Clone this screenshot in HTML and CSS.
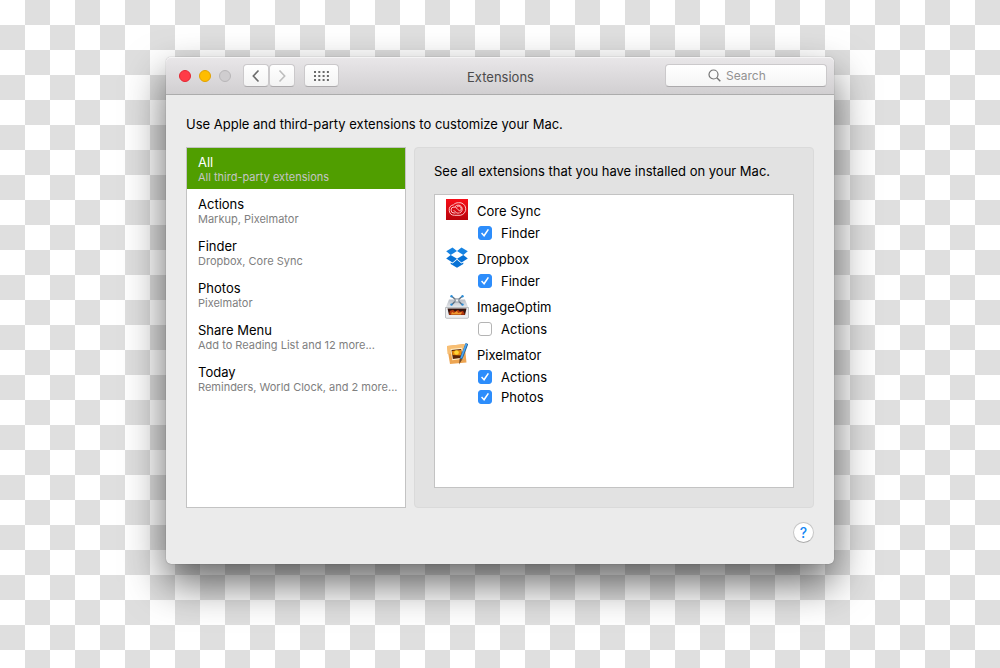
FILE: index.html
```html
<!DOCTYPE html>
<html lang="en">
<head>
<meta charset="utf-8">
<title>Extensions</title>
<link rel="stylesheet" href="styles.css">
</head>
<body>
<div class="window">
  <header class="titlebar">
    <div class="lights">
      <button class="light close" aria-label="Close"></button>
      <button class="light minimize" aria-label="Minimize"></button>
      <button class="light disabled" aria-label="Zoom" disabled></button>
    </div>
    <div class="nav">
      <button class="tool" aria-label="Back"><svg width="10" height="14" viewBox="0 0 10 14"><path d="M7.5 1.500 2.300 7l5.200 5.500" fill="none" stroke="#6c6c6c" stroke-width="1.600"/></svg></button>
      <button class="tool" aria-label="Forward" disabled><svg width="10" height="14" viewBox="0 0 10 14"><path d="M2.500 1.500 7.700 7l-5.200 5.500" fill="none" stroke="#bdbdbd" stroke-width="1.600"/></svg></button>
    </div>
    <button class="tool grid" aria-label="Show All"><svg width="15" height="10" viewBox="0 0 15 10"><path d="M0 1h15M0 5h15M0 9h15" stroke="#6a6a6a" stroke-width="2" stroke-dasharray="2 2.300"/></svg></button>
    <h1 class="title">Extensions</h1>
    <label class="search">
      <svg width="13" height="13" viewBox="0 0 13 13"><circle cx="5.500" cy="5.500" r="4.500" fill="none" stroke="#747474" stroke-width="1.200"/><path d="m8.800 8.800 3.500 3.500" stroke="#747474" stroke-width="1.400"/></svg>
      <input type="search" placeholder="Search" aria-label="Search">
    </label>
  </header>
  <main class="content">
    <p class="intro">Use Apple and third-party extensions to customize your Mac.</p>
    <div class="columns">
      <nav class="sidebar">
        <button class="item selected"><span class="name">All</span><span class="detail">All third-party extensions</span></button>
        <button class="item"><span class="name">Actions</span><span class="detail">Markup, Pixelmator</span></button>
        <button class="item"><span class="name">Finder</span><span class="detail">Dropbox, Core Sync</span></button>
        <button class="item"><span class="name">Photos</span><span class="detail">Pixelmator</span></button>
        <button class="item"><span class="name">Share Menu</span><span class="detail">Add to Reading List and 12 more...</span></button>
        <button class="item"><span class="name">Today</span><span class="detail">Reminders, World Clock, and 2 more...</span></button>
      </nav>
      <section class="panel">
        <p class="hint">See all extensions that you have installed on your Mac.</p>
        <div class="extensions">
          <div class="group">
            <h2 class="app">
              <svg width="22" height="22" viewBox="0 0 22 22"><defs><linearGradient id="red" x2="0" y2="1"><stop stop-color="#f80d18"/><stop offset="1" stop-color="#b8040c"/></linearGradient></defs><path d="M0 0h22v21H0z" fill="url(#red)"/><g fill="none" stroke="#ffd9d9" stroke-width=".9"><path d="M8.600 16.300A5.300 5.300 0 0 1 7.500 5.800C8.800 4.300 10.600 3.700 12.500 3.700A6.300 6.300 0 0 1 14.300 16.300z"/><path d="M13.200 13.900c-1.300.5-2.600.2-3.800-1L7.700 11.200M9.500 14H8a3 3 0 0 1 0-6c1.200 0 2 .5 2.800 1.300l2.700 2.700"/><path d="M8.900 7.900A4 4 0 1 1 13.500 13.900"/><path d="M10.700 8.500a2.400 2.400 0 1 1 2.800 3.400"/></g></svg>
              Core Sync</h2>
            <label class="option"><input type="checkbox" checked>Finder</label>
          </div>
          <div class="group">
            <h2 class="app">
              <svg width="22" height="22" viewBox="0 0 22 22"><g fill="#1683e2"><path d="M6.500.500 11 4 4.700 7.900.2 4.300z"/><path d="M15.500.500 11 4l6.300 3.900 4.500-3.600z"/></g><g fill="#0872d5"><path d="M.2 11.500 4.700 7.900 11 11.800l-4.500 3.700z"/><path d="M21.800 11.500l-4.500-3.600-6.300 3.900 4.500 3.700z"/><path d="m4.700 15.400 1.900 1.100L11 12.800l4.400 3.700 1.900-1.100v1.500L11 20.700l-6.300-3.800z"/></g></svg>
              Dropbox</h2>
            <label class="option"><input type="checkbox" checked>Finder</label>
          </div>
          <div class="group">
            <h2 class="app">
              <svg width="24" height="24" viewBox="0 0 24 24"><defs><linearGradient id="lid" x2="0" y2="1"><stop stop-color="#b9bec6"/><stop offset="1" stop-color="#e9ebee"/></linearGradient></defs><path d="M4 4.500h16l3.500 8.500H.5z" fill="url(#lid)"/><path d="M.5 12.500h23V22q0 1.300-1 1.300h-21q-1 0-1-1.300z" fill="#eceef0" stroke="#a5a9ad" stroke-width=".7"/><path d="M2.500 13.500h19L20 20H4z" fill="#35120c"/><path d="m4 19.700 1-4 3-1 2 2 3-2 2 2 3-1 2 4z" fill="#b83a10"/><path d="m6 19.500 1-2.500 2 1 3-2 1 2 4-1-1 2.500z" fill="#f09a30"/><path d="m7 1.500 3.500 3h3l3.500-3M7 9.500l3.500-3.500h3L17 9.500" fill="none" stroke="#5b6f83" stroke-width="1.500"/><path d="M9.500 3.500h5v4h-5z" fill="#9aa2ab"/><path d="M11 4.500h2v2h-2z" fill="#e9eef3"/><g fill="#2c8ed8"><circle cx="6.500" cy="1.300" r="1.200"/><circle cx="17.500" cy="1.300" r="1.200"/><circle cx="6.500" cy="9.600" r="1.200"/><circle cx="17.500" cy="9.600" r="1.200"/></g></svg>
              ImageOptim</h2>
            <label class="option"><input type="checkbox">Actions</label>
          </div>
          <div class="group">
            <h2 class="app">
              <svg width="22" height="22" viewBox="0 0 22 22"><path d="m1 3 17.500-2 2 18.500-16.500 1.500z" fill="#eda552"/><path d="m1 3 17.500-2 1 8-18 2z" fill="#f8bf74"/><path d="m4.500 6 11.500-1.300 1.300 11-11 1.500z" fill="#fff0c9"/><path d="m5.500 7 9.700-1 1 8.700-9.300 1.200z" fill="#5a2408"/><path d="m6 8 9-1 .7 5.500-9.200-.5z" fill="#e98a0c"/><circle cx="10.500" cy="9.500" r="2.300" fill="#ffd536"/><path d="M21 .5 15 16" stroke="#235f96" stroke-width="2.800"/><path d="M20.500.8 15.200 15" stroke="#4ca6ef" stroke-width="1.700"/><path d="m13.700 15.500 2.500 1-3.200 5z" fill="#6b431f"/></svg>
              Pixelmator</h2>
            <label class="option"><input type="checkbox" checked>Actions</label>
            <label class="option"><input type="checkbox" checked>Photos</label>
          </div>
        </div>
      </section>
    </div>
    <footer class="footer"><button class="help" aria-label="Help">?</button></footer>
  </main>
</div>
</body>
</html>
```
FILE: styles.css
```css
* { box-sizing: border-box; }
body {
  margin: 0;
  min-height: 100vh;
  padding: 57px 166px;
  font-family: Inter, "Liberation Sans", sans-serif;
  font-size: 13px;
  line-height: 16px;
  color: #000;
  background: repeating-conic-gradient(#dfdfdf 0 25%, #fff 0 50%) 0 0 / 50px 50px;
}
button, input { font: inherit; margin: 0; }
h1, h2, p { margin: 0; font-size: 13px; font-weight: 400; }
.window {
  border-radius: 5px;
  background: #ebebeb;
  box-shadow: 0 0 1px rgba(0, 0, 0, .5), 0 19px 42px rgba(0, 0, 0, .6);
}
.titlebar {
  display: grid;
  grid-template-columns: auto auto auto 1fr 162px;
  align-items: center;
  height: 38px;
  padding: 0 7px 0 13px;
  border-bottom: 1px solid #acacac;
  border-radius: 5px 5px 0 0;
  background: linear-gradient(#e9e7e9, #d1cfd1);
  box-shadow: inset 0 1px #f5f4f5;
}
.lights { display: flex; gap: 8px; margin-right: 12px; }
.light { width: 12px; height: 12px; padding: 0; border: 1px solid; border-radius: 50%; }
.close { background: #ff3b47; border-color: #e42632; }
.minimize { background: #ffbd00; border-color: #e1a100; }
.disabled { background: #cfcdcf; border-color: #b8b6b8; }
.nav { display: flex; margin-right: 9px; }
.tool {
  display: flex;
  align-items: center;
  justify-content: center;
  width: 26px;
  height: 23px;
  padding: 0;
  border: 1px solid #cbc9cb;
  border-bottom-color: #acaaac;
  border-radius: 4px;
  background: linear-gradient(#fff, #f3f3f3);
}
.grid { width: 35px; }
.title { padding: 2px 3px 0 0; text-align: center; color: #4b4b4b; }
.search {
  display: flex;
  align-items: center;
  gap: 5px;
  height: 23px;
  padding-left: 42px;
  border: 1px solid #cbc9cb;
  border-bottom-color: #acaaac;
  border-radius: 4px;
  background: linear-gradient(#fff, #f5f5f5);
}
.search svg { flex: none; }
.search input {
  width: 100%;
  min-width: 0;
  padding: 0;
  border: 0;
  outline: 0;
  background: none;
  font-size: 12px;
  appearance: none;
}
.search input::placeholder { color: #929292; }
.content { padding: 21px 20px; }
.columns {
  display: grid;
  grid-template-columns: 220px 1fr;
  gap: 8px;
  margin-top: 15px;
}
.sidebar { border: 1px solid #c3c3c3; background: #fff; }
.item {
  display: flex;
  flex-direction: column;
  width: 100%;
  height: 41px;
  margin-bottom: 1px;
  padding: 6px 0 5px 11px;
  border: 0;
  background: none;
  color: #000;
  text-align: left;
  white-space: nowrap;
}
.detail { font-size: 11px; line-height: 14px; color: #808080; }
.selected { color: #fff; background: #509e00; }
.selected .detail { color: #c5c5c5; }
.panel {
  padding: 15px 19px 19px;
  border: 1px solid #dadada;
  border-radius: 4px;
  background: #e2e2e2;
}
.extensions {
  min-height: 294px;
  margin-top: 15px;
  padding: 4px 11px;
  border: 1px solid #c3c3c3;
  background: #fff;
}
.group { margin-bottom: 4px; }
.app {
  display: grid;
  grid-template-columns: 22px 1fr;
  gap: 9px;
  height: 24px;
  line-height: 24px;
}
.app svg { justify-self: center; }
.option {
  display: flex;
  align-items: center;
  gap: 9px;
  height: 20px;
  padding-left: 32px;
}
.option input {
  width: 14px;
  height: 14px;
  border: 1px solid #b4b4b4;
  border-radius: 3px;
  background: #fff;
  appearance: none;
}
.option input:checked {
  display: grid;
  place-items: center;
  border-color: #2d8dfb;
  background: #2d8dfb;
}
.option input:checked::before {
  content: "";
  width: 8px;
  height: 8px;
  background: #fff;
  clip-path: polygon(0 56%, 14% 44%, 36% 70%, 84% 0, 100% 10%, 40% 100%);
}
.footer { display: flex; justify-content: flex-end; margin-top: 14px; }
.help {
  width: 21px;
  height: 21px;
  padding: 0;
  border: 1px solid #c6c6c6;
  border-bottom-color: #aaa;
  border-radius: 50%;
  background: #fff;
  color: #1588f5;
  font-size: 14px;
  font-weight: 500;
}
```
